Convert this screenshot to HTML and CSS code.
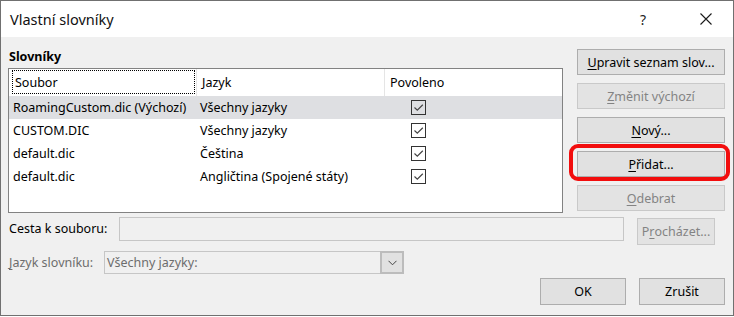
FILE: index.html
```html
<!DOCTYPE html>
<html lang="cs">
<head>
<meta charset="utf-8">
<title>Vlastní slovníky</title>
<link rel="stylesheet" href="styles.css">
</head>
<body>
<div class="dialog">
  <div class="titlebar">
    <span class="title">Vlastní slovníky</span>
    <span class="help">?</span>
    <span class="close"><svg width="12" height="12" viewBox="0 0 12 12"><path d="M0.5 0.5L11.5 11.5M11.5 0.5L0.5 11.5" stroke="#1a1a1a" stroke-width="1.1" fill="none"/></svg></span>
  </div>
  <div class="content">
    <div class="top">
      <div class="left">
        <div class="group-label">Slovníky</div>
        <div class="list">
          <div class="list-header">
            <div class="hcell c1"><span class="focus">Soubor</span></div>
            <div class="hcell c2">Jazyk</div>
            <div class="hcell c3">Povoleno</div>
          </div>
          <div class="row selected">
            <div class="cell c1">RoamingCustom.dic (Výchozí)</div>
            <div class="cell c2">Všechny jazyky</div>
            <div class="cell c3"><span class="check"><svg width="13" height="13" viewBox="0 0 13 13"><path d="M2.5 6.5L5.3 9.2L10.8 3.8" stroke="#444" stroke-width="1.2" fill="none"/></svg></span></div>
          </div>
          <div class="row">
            <div class="cell c1">CUSTOM.DIC</div>
            <div class="cell c2">Všechny jazyky</div>
            <div class="cell c3"><span class="check"><svg width="13" height="13" viewBox="0 0 13 13"><path d="M2.5 6.5L5.3 9.2L10.8 3.8" stroke="#444" stroke-width="1.2" fill="none"/></svg></span></div>
          </div>
          <div class="row">
            <div class="cell c1">default.dic</div>
            <div class="cell c2">Čeština</div>
            <div class="cell c3"><span class="check"><svg width="13" height="13" viewBox="0 0 13 13"><path d="M2.5 6.5L5.3 9.2L10.8 3.8" stroke="#444" stroke-width="1.2" fill="none"/></svg></span></div>
          </div>
          <div class="row">
            <div class="cell c1">default.dic</div>
            <div class="cell c2">Angličtina (Spojené státy)</div>
            <div class="cell c3"><span class="check"><svg width="13" height="13" viewBox="0 0 13 13"><path d="M2.5 6.5L5.3 9.2L10.8 3.8" stroke="#444" stroke-width="1.2" fill="none"/></svg></span></div>
          </div>
        </div>
      </div>
      <div class="side-buttons">
        <div class="btn"><u>U</u>pravit seznam slov...</div>
        <div class="btn disabled"><u>Z</u>měnit výchozí</div>
        <div class="btn"><u>N</u>ový...</div>
        <div class="btn highlighted"><u>P</u>řidat...<span class="ring"></span></div>
        <div class="btn disabled"><u>O</u>debrat</div>
      </div>
    </div>
    <div class="path-row">
      <div class="path-label">Cesta k souboru:</div>
      <div class="path-input"></div>
      <div class="btn disabled browse">P<u>r</u>ocházet...</div>
    </div>
    <div class="lang-row">
      <div class="lang-label"><u>J</u>azyk slovníku:</div>
      <div class="combo">
        <span class="combo-text">Všechny jazyky:</span>
        <span class="combo-btn"><svg width="9" height="6" viewBox="0 0 9 6"><path d="M0.5 0.8L4.5 4.8L8.5 0.8" stroke="#444" stroke-width="1" fill="none"/></svg></span>
      </div>
    </div>
    <div class="footer">
      <div class="btn footer-btn">OK</div>
      <div class="btn footer-btn">Zrušit</div>
    </div>
  </div>
</div>
</body>
</html>
```

FILE: styles.css
```css
* { box-sizing: border-box; }
html, body { margin: 0; padding: 0; background: #fff; }
body {
  width: 734px;
  height: 317px;
  overflow: hidden;
  font-family: "Noto Sans", "Open Sans", sans-serif;
  font-size: 12.5px;
  color: #000;
}
u { text-decoration: underline; text-underline-offset: 2px; text-decoration-thickness: 1px; }

.dialog {
  width: 734px;
  height: 316px;
  border: 1px solid #707070;
  background: #f0f0f0;
  display: flex;
  flex-direction: column;
}
.titlebar {
  height: 36px;
  flex: none;
  background: #fff;
  display: flex;
  align-items: center;
  padding-left: 9px;
}
.title { font-size: 14.5px; flex: 1; color: #111; }
.help { font-size: 14px; width: 14px; margin-right: 46px; color: #222; }
.close { width: 12px; height: 12px; margin-right: 21px; display: flex; }

.content {
  flex: 1;
  padding: 12px 8px 0 7px;
  display: flex;
  flex-direction: column;
}
.top { display: flex; gap: 14px; }
.left { width: 555px; display: flex; flex-direction: column; }
.group-label { height: 19px; line-height: 16px; font-weight: bold; padding-left: 1px; }
.list {
  height: 145px;
  border: 1px solid #828282;
  background: #fff;
}
.list-header, .row {
  display: grid;
  grid-template-columns: 188px 188px 1fr;
}
.list-header { height: 27px; }
.hcell { display: flex; align-items: center; border-right: 1px solid #e5e5e5; }
.hcell.c3 { border-right: none; padding-left: 5px; }
.hcell.c2 { padding-left: 5px; }
.focus {
  margin: 1px 1px 2px 3px;
  flex: 1;
  align-self: stretch;
  display: flex;
  align-items: center;
  padding-left: 2px;
  border: 1px dotted #000;
}
.row { height: 23px; align-items: center; }
.row.selected { background: #dedfe2; }
.cell.c1 { padding-left: 4px; }
.cell.c2 { padding-left: 3px; }
.cell.c3 { padding-left: 26px; display: flex; }
.check {
  width: 15px;
  height: 15px;
  border: 1px solid #333;
  display: flex;
  align-items: center;
  justify-content: center;
}

.side-buttons { width: 148px; display: flex; flex-direction: column; gap: 8px; }
.btn {
  height: 26px;
  border: 1px solid #adadad;
  background: #e1e1e1;
  display: flex;
  align-items: center;
  justify-content: center;
  color: #000;
}
.btn.disabled { border-color: #c9c9c9; color: #838383; background: #e3e3e3; }
.btn.highlighted { position: relative; }
.ring {
  position: absolute;
  left: -9px;
  top: -8px;
  right: -6px;
  bottom: -5px;
  border: 4px solid #f20d0d;
  border-radius: 9px;
}

.path-row { display: flex; align-items: flex-start; margin-top: 4px; height: 28px; }
.path-label { width: 111px; padding-left: 1px; line-height: 24px; }
.path-input { width: 505px; height: 24px; border: 1px solid #c6c6c6; background: #f0f0f0; }
.browse { width: 78px; height: 27px; margin-left: 13px; margin-top: 1px; }

.lang-row { display: flex; align-items: center; margin-top: 6px; }
.lang-label { width: 96px; padding-left: 1px; color: #6d6d6d; }
.combo {
  width: 300px;
  height: 23px;
  border: 1px solid #c6c6c6;
  display: flex;
  align-items: center;
}
.combo-text { flex: 1; padding-left: 2px; color: #6d6d6d; }
.combo-btn {
  width: 24px;
  height: 23px;
  margin: -1px -1px -1px 0;
  border: 2px solid #bcbcbc;
  background: #e1e1e1;
  display: flex;
  align-items: center;
  justify-content: center;
}

.footer { display: flex; justify-content: flex-end; gap: 13px; margin-top: 4px; }
.footer-btn { width: 86px; height: 27px; }
```
